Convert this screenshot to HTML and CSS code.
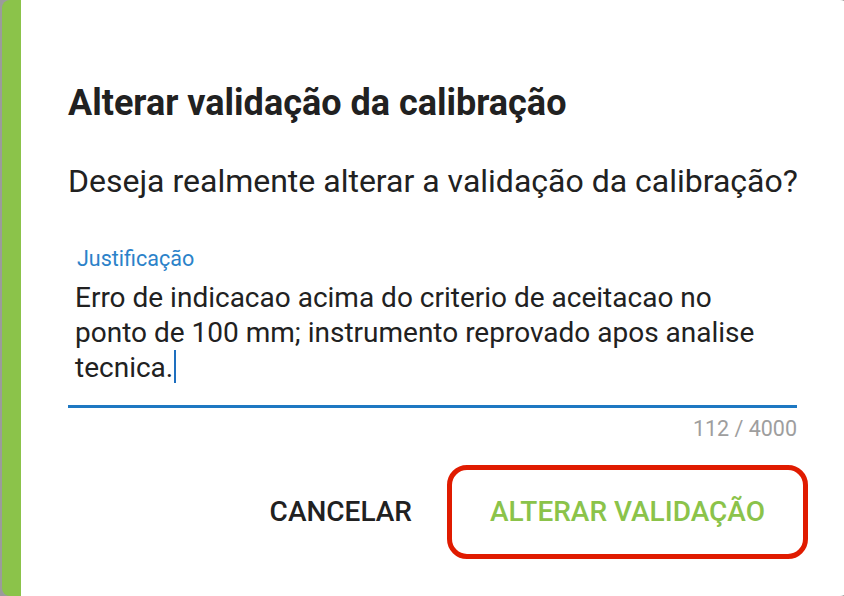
FILE: index.html
```html
<!DOCTYPE html>
<html lang="pt">
<head>
<meta charset="utf-8">
<title>Alterar validação da calibração</title>
<link rel="stylesheet" href="styles.css">
</head>
<body>
<div class="dialog">
  <h2 class="title">Alterar validação da calibração</h2>
  <p class="prompt">Deseja realmente alterar a validação da calibração?</p>
  <div class="field">
    <label class="label">Justificação</label>
    <div class="input">Erro de indicacao acima do criterio de aceitacao no<br>ponto de 100 mm; instrumento reprovado apos analise<br>tecnica.<span class="caret"></span></div>
    <div class="counter">112 / 4000</div>
  </div>
  <div class="actions">
    <button class="btn btn-cancel">CANCELAR</button>
    <div class="highlight">
      <button class="btn btn-confirm">ALTERAR VALIDAÇÃO</button>
    </div>
  </div>
</div>
</body>
</html>
```
FILE: styles.css
```css
html, body {
  margin: 0;
  padding: 0;
  height: 100%;
}
body {
  background: #9b9b9b;
  font-family: Roboto, "Liberation Sans", sans-serif;
  overflow: hidden;
}
.dialog {
  box-sizing: border-box;
  margin-left: 2px;
  width: 846px;
  height: 596px;
  background: #ffffff;
  border-left: 19px solid #8bc34a;
  border-radius: 8px;
  padding: 82px 51px 0 47px;
  display: flex;
  flex-direction: column;
}
.title {
  margin: 0;
  font-size: 36px;
  line-height: 42px;
  font-weight: 700;
  color: #212121;
  white-space: nowrap;
}
.prompt {
  margin: 37px 0 0 0;
  font-size: 32px;
  line-height: 40px;
  color: #212121;
  white-space: nowrap;
}
.field {
  margin-top: 45px;
  display: flex;
  flex-direction: column;
}
.label {
  padding-left: 9px;
  font-size: 21.5px;
  line-height: 26px;
  color: #2b82c9;
}
.input {
  padding: 9px 0 19px 7px;
  font-size: 28px;
  line-height: 34.5px;
  color: #212121;
  border-bottom: 3px solid #1e78c2;
  white-space: nowrap;
}
.caret {
  display: inline-block;
  width: 2px;
  height: 33px;
  margin-left: 1px;
  vertical-align: -6px;
  background: #1e6fbf;
}
.counter {
  margin-top: 8px;
  text-align: right;
  font-size: 21.5px;
  line-height: 26px;
  color: #9e9e9e;
}
.actions {
  margin-top: 23px;
  display: flex;
  justify-content: flex-end;
  align-items: center;
  gap: 35px;
  margin-right: -11px;
}
.btn {
  background: none;
  border: none;
  font-family: Roboto, "Liberation Sans", sans-serif;
  font-weight: 500;
  font-size: 28px;
  line-height: 34px;
  padding: 0;
  cursor: pointer;
}
.btn-cancel {
  color: #212121;
}
.btn-confirm {
  color: #8bc34a;
}
.highlight {
  box-sizing: border-box;
  width: 361px;
  height: 94px;
  border: 5px solid #e01b00;
  border-radius: 20px;
  display: flex;
  align-items: center;
  justify-content: center;
}
```
